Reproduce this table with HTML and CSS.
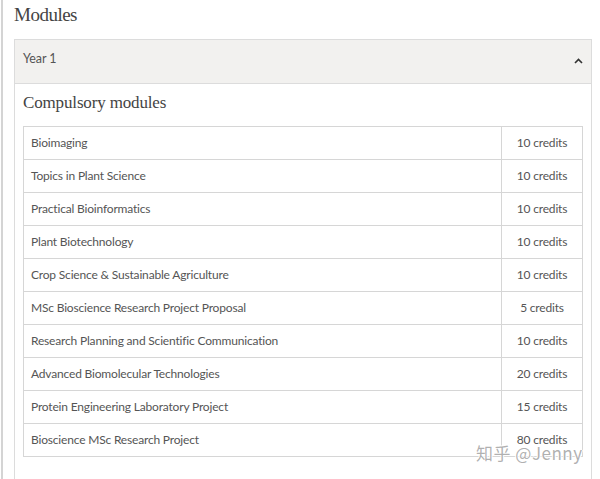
FILE: index.html
```html
<!DOCTYPE html>
<html lang="en">
<head>
<meta charset="utf-8">
<title>Modules</title>
<link rel="stylesheet" href="styles.css">
</head>
<body>
<div class="page">
  <h2 class="title">Modules</h2>
  <section class="panel">
    <div class="panel-head">
      <span class="year">Year 1</span>
      <svg class="chev" width="9" height="6" viewBox="0 0 9 6"><polyline points="1,5 4.5,1.5 8,5" fill="none" stroke="#333" stroke-width="1.6"/></svg>
    </div>
    <div class="panel-body">
      <h3 class="sub">Compulsory modules</h3>
      <table class="mods">
        <tr><td class="name">Bioimaging</td><td class="cred">10 credits</td></tr>
        <tr><td class="name">Topics in Plant Science</td><td class="cred">10 credits</td></tr>
        <tr><td class="name">Practical Bioinformatics</td><td class="cred">10 credits</td></tr>
        <tr><td class="name">Plant Biotechnology</td><td class="cred">10 credits</td></tr>
        <tr><td class="name">Crop Science &amp; Sustainable Agriculture</td><td class="cred">10 credits</td></tr>
        <tr><td class="name">MSc Bioscience Research Project Proposal</td><td class="cred">5 credits</td></tr>
        <tr><td class="name">Research Planning and Scientific Communication</td><td class="cred">10 credits</td></tr>
        <tr><td class="name">Advanced Biomolecular Technologies</td><td class="cred">20 credits</td></tr>
        <tr><td class="name">Protein Engineering Laboratory Project</td><td class="cred">15 credits</td></tr>
        <tr><td class="name">Bioscience MSc Research Project</td><td class="cred">80 credits</td></tr>
      </table>
    </div>
  </section>
</div>
<div class="watermark">知乎 @Jenny</div>
</body>
</html>
```
FILE: styles.css
```css
html, body {
  margin: 0;
  padding: 0;
  background: #fff;
  height: 100%;
  overflow: hidden;
}
body {
  font-family: Lato, "Noto Sans", sans-serif;
  color: #555;
}
.page {
  margin-left: 1px;
  border-left: 2px solid #d4d4d4;
  padding: 0 8px 0 11px;
  min-height: 479px;
  box-sizing: border-box;
}
.title {
  margin: 0 0 9px 0;
  font-family: "Liberation Serif", serif;
  font-weight: normal;
  font-size: 19px;
  letter-spacing: -0.5px;
  line-height: 30px;
  color: #444;
}
.panel {
  border: 1px solid #dcdcdc;
  border-bottom: none;
  min-height: 460px;
}
.panel-head {
  height: 43px;
  background: #f2f1ef;
  border-bottom: 1px solid #dcdcdc;
  display: flex;
  align-items: center;
  justify-content: space-between;
  padding: 0 8px;
}
.year {
  font-size: 12.5px;
  letter-spacing: -0.1px;
  color: #555;
  margin-bottom: 6px;
}
.chev {
  display: block;
  margin-bottom: 2px;
}
.panel-body {
  padding: 7px 8px 0 8px;
}
.sub {
  margin: 0 0 11px 0;
  font-family: "Liberation Serif", serif;
  font-weight: normal;
  font-size: 17px;
  letter-spacing: -0.15px;
  line-height: 24px;
  color: #444;
}
.mods {
  width: 100%;
  border-collapse: collapse;
  border: 1px solid #d6d6d6;
}
.mods tr {
  height: 33px;
}
.mods td {
  border: 1px solid #d6d6d6;
  padding: 0 7px;
  font-size: 12px;
  line-height: 16px;
  letter-spacing: -0.18px;
  color: #555;
}
.mods td.cred {
  width: 80px;
  text-align: center;
  padding: 0;
}
.watermark {
  position: absolute;
  left: 476px;
  top: 440px;
  font-family: "Noto Sans CJK SC", "Noto Sans", sans-serif;
  font-size: 17px;
  color: rgba(150, 150, 150, 0.75);
  text-shadow: 1px 0 #fff, -1px 0 #fff, 0 1px #fff, 0 -1px #fff;
  letter-spacing: 0.5px;
  white-space: nowrap;
}
```
